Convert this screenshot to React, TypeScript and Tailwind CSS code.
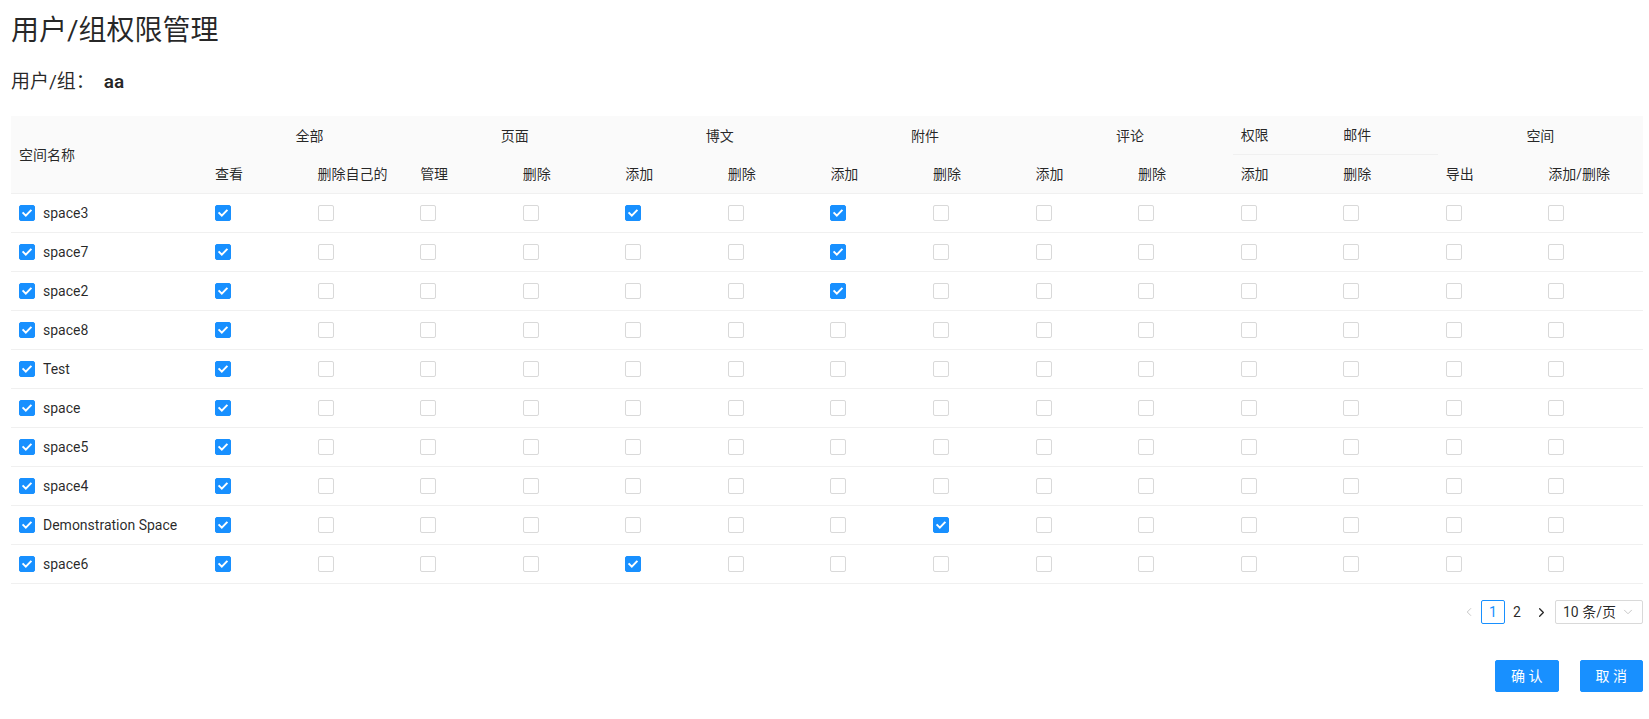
import React from "react";
import { ChevronLeft, ChevronRight, ChevronDown } from "lucide-react";

const groups = [
  { label: "全部", span: 2 },
  { label: "页面", span: 2 },
  { label: "博文", span: 2 },
  { label: "附件", span: 2 },
  { label: "评论", span: 2 },
  { label: "权限", span: 1 },
  { label: "邮件", span: 1 },
  { label: "空间", span: 2 },
];

const subs = [
  "查看",
  "删除自己的",
  "管理",
  "删除",
  "添加",
  "删除",
  "添加",
  "删除",
  "添加",
  "删除",
  "添加",
  "删除",
  "导出",
  "添加/删除",
];

const rows: { name: string; checked: number[] }[] = [
  { name: "space3", checked: [0, 4, 6] },
  { name: "space7", checked: [0, 6] },
  { name: "space2", checked: [0, 6] },
  { name: "space8", checked: [0] },
  { name: "Test", checked: [0] },
  { name: "space", checked: [0] },
  { name: "space5", checked: [0] },
  { name: "space4", checked: [0] },
  { name: "Demonstration Space", checked: [0, 7] },
  { name: "space6", checked: [0, 4] },
];

function Checkbox({ checked }: { checked: boolean }) {
  if (checked) {
    return (
      <span className="flex h-4 w-4 shrink-0 items-center justify-center rounded-[2px] border border-[#1890ff] bg-[#1890ff]">
        <svg viewBox="0 0 14 14" className="h-[14px] w-[14px]">
          <path
            d="M3.3 7.1 L5.8 9.6 L10.7 4.6"
            fill="none"
            stroke="white"
            strokeWidth="2"
            strokeLinecap="square"
          />
        </svg>
      </span>
    );
  }
  return (
    <span className="block h-4 w-4 shrink-0 rounded-[2px] border border-[#d9d9d9] bg-white" />
  );
}

export default function App() {
  return (
    <div className="min-h-screen bg-white pl-[11px] pr-[6px] pt-[11px] font-['Roboto','Noto_Sans_CJK_SC',sans-serif] text-[14px] text-[rgba(0,0,0,0.85)]">
      <h1 className="text-[28px] leading-[40px] font-normal">用户/组权限管理</h1>
      <div className="mt-[18px] flex items-center text-[19px] leading-[26px]">
        <span>用户/组：</span>
        <span className="ml-[9px] font-semibold">aa</span>
      </div>

      <table className="mt-[21px] w-full table-fixed border-separate border-spacing-0">
        <colgroup>
          <col className="w-[196px]" />
          {subs.map((_, i) => (
            <col key={i} />
          ))}
        </colgroup>
        <thead>
          <tr className="bg-[#fafafa]">
            <th
              rowSpan={2}
              className="border-b border-[#f0f0f0] bg-[#fafafa] p-2 text-left font-normal leading-[22px]"
            >
              空间名称
            </th>
            {groups.map((g, i) =>
              g.span > 1 ? (
                <th
                  key={i}
                  colSpan={g.span}
                  className="bg-[#fafafa] p-2 text-center font-normal leading-[22px]"
                >
                  {g.label}
                </th>
              ) : (
                <th
                  key={i}
                  className="border-b border-[#f0f0f0] bg-[#fafafa] p-2 text-left font-normal leading-[22px]"
                >
                  {g.label}
                </th>
              )
            )}
          </tr>
          <tr>
            {subs.map((s, i) => (
              <th
                key={i}
                className="border-b border-[#f0f0f0] bg-[#fafafa] p-2 text-left font-normal leading-[22px] whitespace-nowrap"
              >
                {s}
              </th>
            ))}
          </tr>
        </thead>
        <tbody>
          {rows.map((r, ri) => (
            <tr key={ri}>
              <td className="border-b border-[#f0f0f0] p-2">
                <div className="flex h-[22px] items-center gap-2 whitespace-nowrap">
                  <Checkbox checked />
                  <span>{r.name}</span>
                </div>
              </td>
              {subs.map((_, ci) => (
                <td key={ci} className="border-b border-[#f0f0f0] p-2">
                  <div className="flex h-[22px] items-center">
                    <Checkbox checked={r.checked.includes(ci)} />
                  </div>
                </td>
              ))}
            </tr>
          ))}
        </tbody>
      </table>

      <div className="mt-4 flex items-center justify-end">
        <span className="flex h-6 w-6 items-center justify-center text-[rgba(0,0,0,0.25)]">
          <ChevronLeft size={14} strokeWidth={1.5} />
        </span>
        <span className="flex h-6 min-w-6 items-center justify-center rounded-[2px] border border-[#1890ff] text-[#1890ff]">
          1
        </span>
        <span className="flex h-6 min-w-6 items-center justify-center">2</span>
        <span className="flex h-6 w-6 items-center justify-center text-[rgba(0,0,0,0.85)]">
          <ChevronRight size={15} strokeWidth={2} />
        </span>
        <div className="ml-[2px] flex h-6 w-[88px] items-center justify-between rounded-[2px] border border-[#d9d9d9] px-[7px]">
          <span className="leading-[22px]">10 条/页</span>
          <ChevronDown size={14} strokeWidth={1.5} className="text-[#bfbfbf]" />
        </div>
      </div>

      <div className="mt-9 flex justify-end gap-[21px]">
        <button className="h-8 rounded-[2px] border border-[#1890ff] bg-[#1890ff] px-[15px] text-[14px] text-white">
          确 认
        </button>
        <button className="h-8 rounded-[2px] border border-[#1890ff] bg-[#1890ff] px-[15px] text-[14px] text-white">
          取 消
        </button>
      </div>
    </div>
  );
}
